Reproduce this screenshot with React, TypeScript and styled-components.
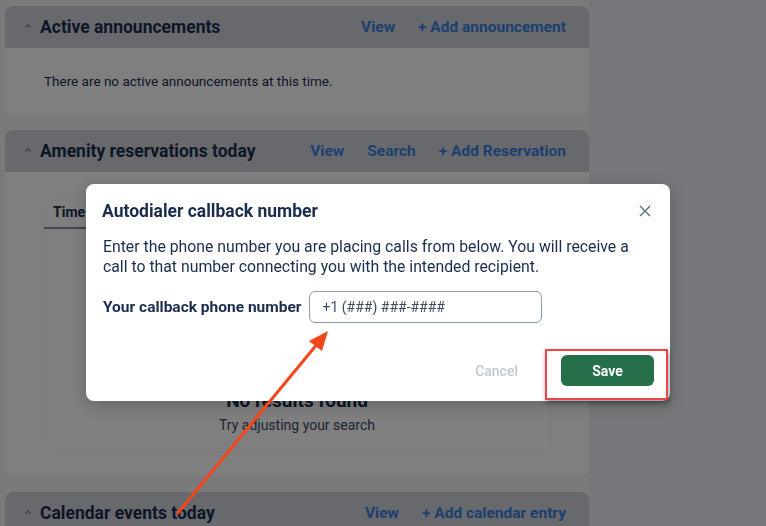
import styled, { createGlobalStyle } from "styled-components";

const GlobalStyle = createGlobalStyle`
  html, body {
    margin: 0;
    padding: 0;
    background: #eceef4;
    font-family: Roboto, "Liberation Sans", sans-serif;
    overflow: hidden;
  }
`;

const navy = "#1b2d4f";
const linkBlue = "#3a7fe0";

const Chevron = () => (
  <svg width="10" height="10" viewBox="0 0 10 10">
    <path d="M2.5 6.5 L5 4 L7.5 6.5" fill="none" stroke="#7d8593" strokeWidth="1.3" />
  </svg>
);

type CardProps = {
  title: string;
  links: string[];
  children?: React.ReactNode;
};

const Card = ({ title, links, children }: CardProps) => (
  <StyledCard>
    <CardHeader>
      <Chevron />
      <h2>{title}</h2>
      <Links>
        {links.map((l) => (
          <a key={l}>{l}</a>
        ))}
      </Links>
    </CardHeader>
    {children}
  </StyledCard>
);

const App = (): JSX.Element => {
  return (
    <>
      <GlobalStyle />
      <Page>
        <Column>
          <Card title="Active announcements" links={["View", "+ Add announcement"]}>
            <EmptyText>There are no active announcements at this time.</EmptyText>
          </Card>
          <Card
            title="Amenity reservations today"
            links={["View", "Search", "+ Add Reservation"]}
          >
            <TableWrap>
              <TableBox>
                <TableHead>
                  <span>Time</span>
                </TableHead>
                <NoResults>
                  <h3>No results found</h3>
                  <p>Try adjusting your search</p>
                </NoResults>
              </TableBox>
            </TableWrap>
          </Card>
          <Card title="Calendar events today" links={["View", "+ Add calendar entry"]} />
        </Column>
      </Page>

      <Overlay />

      <Modal>
        <ModalHeader>
          <h1>Autodialer callback number</h1>
          <CloseButton aria-label="Close">
            <svg width="12" height="12" viewBox="0 0 12 12">
              <path d="M1 1 L11 11 M11 1 L1 11" stroke="#5c6b84" strokeWidth="1.4" />
            </svg>
          </CloseButton>
        </ModalHeader>
        <Description>
          Enter the phone number you are placing calls from below. You will receive a
          call to that number connecting you with the intended recipient.
        </Description>
        <FieldRow>
          <label htmlFor="cb">Your callback phone number</label>
          <PhoneInput id="cb" placeholder="+1 (###) ###-####" />
        </FieldRow>
        <Footer>
          <TextButton disabled>Cancel</TextButton>
          <SaveButton>Save</SaveButton>
        </Footer>
      </Modal>

      <Highlight />

      <ArrowLayer width="766" height="526" viewBox="0 0 766 526">
        <line x1="177" y1="514" x2="318" y2="343" stroke="#f2461c" strokeWidth="3" />
        <polygon points="328,331 322,351 309,341" fill="#f2461c" />
      </ArrowLayer>
    </>
  );
};

export default App;

const Page = styled.div`
  display: flex;
  min-height: 526px;
`;

const Column = styled.main`
  width: 589px;
  padding: 6px 0 0 5px;
  box-sizing: border-box;
  background: #f4f4f5;
  display: flex;
  flex-direction: column;
  gap: 16px;
`;

const StyledCard = styled.section`
  background: #ffffff;
  border-radius: 8px;
  overflow: hidden;
  flex-shrink: 0;
`;

const CardHeader = styled.header`
  display: flex;
  align-items: center;
  height: 42px;
  padding: 0 23px 0 18px;
  background: #cfd3d9;

  & svg {
    margin-right: 7px;
    margin-top: -2px;
  }

  & h2 {
    margin: 0;
    font-size: 17.5px;
    font-weight: 700;
    color: ${navy};
    flex: 1;
  }
`;

const Links = styled.nav`
  display: flex;
  gap: 23px;

  & a {
    color: ${linkBlue};
    font-size: 15.5px;
    font-weight: 700;
  }
`;

const EmptyText = styled.p`
  margin: 0;
  height: 66px;
  display: flex;
  align-items: center;
  padding-left: 39px;
  font-size: 13.5px;
  color: ${navy};
`;

const TableWrap = styled.div`
  padding: 24px 38px 23px 38px;
`;

const TableBox = styled.div`
  height: 255px;
  border: 1px solid #f7f7f7;
  border-radius: 8px;
  display: flex;
  flex-direction: column;
`;

const TableHead = styled.div`
  height: 30px;
  border-bottom: 2px solid #8590a2;
  display: flex;
  align-items: center;
  padding-left: 9px;

  & span {
    font-size: 14px;
    font-weight: 700;
    color: ${navy};
  }
`;

const NoResults = styled.div`
  flex: 1;
  display: flex;
  flex-direction: column;
  align-items: center;
  justify-content: flex-end;
  padding-bottom: 19px;

  & h3 {
    margin: 0 0 5px;
    font-size: 19px;
    font-weight: 700;
    color: ${navy};
  }

  & p {
    margin: 0;
    font-size: 14px;
    color: #3c4a63;
  }
`;

const Overlay = styled.div`
  position: fixed;
  inset: 0;
  background: rgba(0, 0, 0, 0.5);
`;

const Modal = styled.div`
  position: fixed;
  left: 86px;
  top: 184px;
  width: 584px;
  height: 217px;
  box-sizing: border-box;
  background: #ffffff;
  border-radius: 8px;
  padding: 16px 16px 15px 16px;
  box-shadow: 0 4px 16px rgba(0, 0, 0, 0.2);
  display: flex;
  flex-direction: column;
`;

const ModalHeader = styled.div`
  display: flex;
  align-items: center;
  justify-content: space-between;
  height: 22px;

  & h1 {
    margin: 0;
    font-size: 17.5px;
    font-weight: 700;
    color: ${navy};
  }
`;

const CloseButton = styled.button`
  border: 0;
  background: none;
  padding: 0;
  margin-right: 3px;
  display: flex;
`;

const Description = styled.p`
  margin: 15px 0 0 1px;
  max-width: 530px;
  font-size: 15.8px;
  line-height: 20px;
  color: ${navy};
`;

const FieldRow = styled.div`
  display: flex;
  align-items: center;
  gap: 8px;
  margin: 14px 0 0 1px;

  & label {
    font-size: 15.5px;
    font-weight: 700;
    color: ${navy};
  }
`;

const PhoneInput = styled.input`
  width: 233px;
  height: 32px;
  box-sizing: border-box;
  border: 1px solid #8d9bb3;
  border-radius: 6px;
  padding: 0 12px;
  font-family: Roboto, "Liberation Sans", sans-serif;
  font-size: 14px;

  &::placeholder {
    color: #3f4c66;
  }
`;

const Footer = styled.div`
  margin-top: auto;
  display: flex;
  justify-content: flex-end;
  align-items: center;
  gap: 23px;
`;

const TextButton = styled.button`
  border: 0;
  background: none;
  font-family: Roboto, "Liberation Sans", sans-serif;
  font-size: 14px;
  font-weight: 500;
  color: #c3c9d3;
  padding: 0 20px;
  height: 31px;
`;

const SaveButton = styled.button`
  width: 93px;
  height: 31px;
  border: 0;
  border-radius: 6px;
  background: #25704a;
  color: #ffffff;
  font-family: Roboto, "Liberation Sans", sans-serif;
  font-size: 14px;
  font-weight: 700;
`;

const Highlight = styled.div`
  position: fixed;
  left: 545px;
  top: 349px;
  width: 123px;
  height: 51px;
  box-sizing: border-box;
  border: 2px solid #f04448;
  box-shadow: 1px 3px 5px rgba(0, 0, 0, 0.4);
`;

const ArrowLayer = styled.svg`
  position: fixed;
  left: 0;
  top: 0;
  pointer-events: none;
`;
